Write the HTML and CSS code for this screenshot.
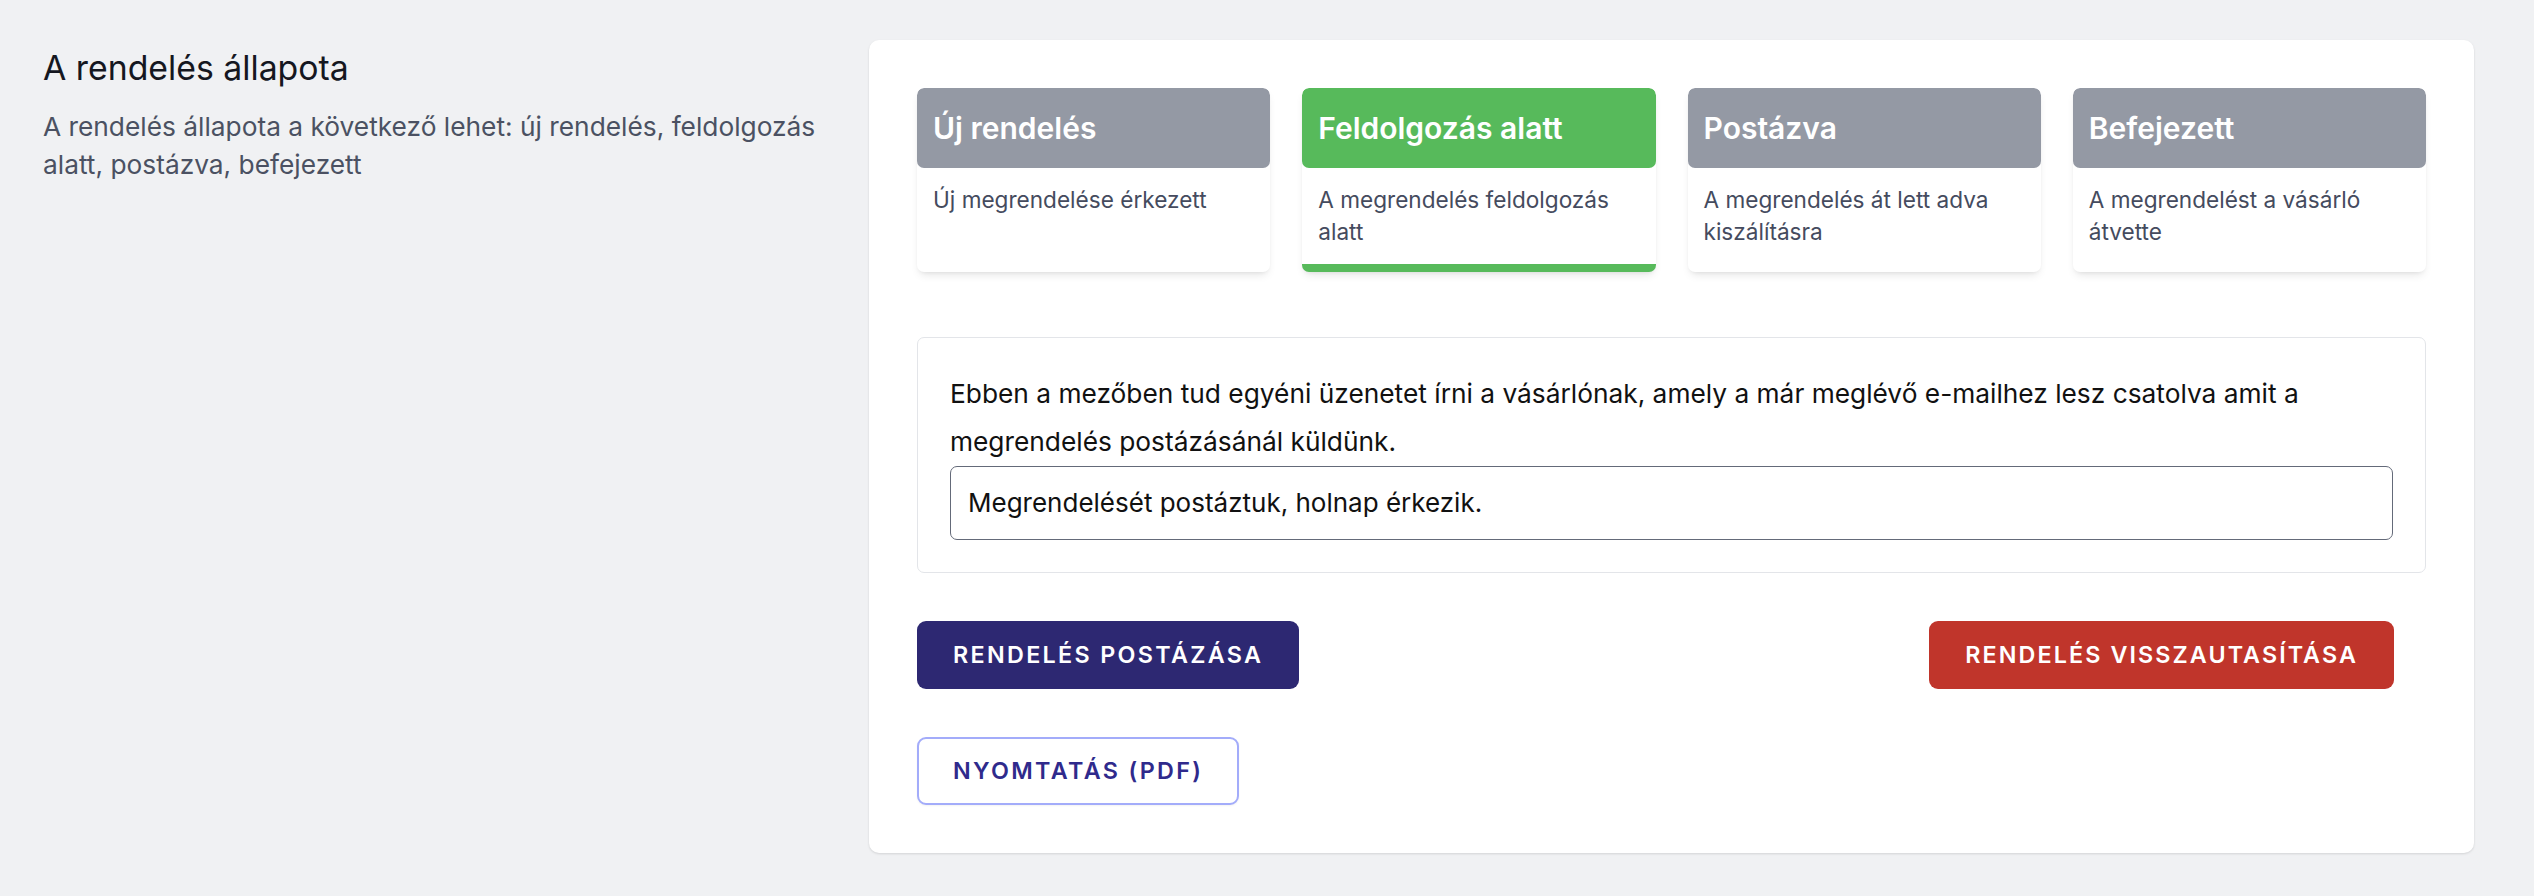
FILE: index.html
```html
<!DOCTYPE html>
<html lang="hu">
<head>
<meta charset="utf-8">
<title>A rendelés állapota</title>
<link rel="stylesheet" href="styles.css">
</head>
<body>
<div class="layout">
  <section class="intro">
    <h2 class="intro-title">A rendelés állapota</h2>
    <p class="intro-text">A rendelés állapota a következő lehet: új rendelés, feldolgozás alatt, postázva, befejezett</p>
  </section>

  <section class="panel">
    <div class="statuses">
      <div class="status">
        <div class="status-head">Új rendelés</div>
        <div class="status-body">Új megrendelése érkezett</div>
      </div>
      <div class="status status-active">
        <div class="status-head">Feldolgozás alatt</div>
        <div class="status-body">A megrendelés feldolgozás alatt</div>
      </div>
      <div class="status">
        <div class="status-head">Postázva</div>
        <div class="status-body">A megrendelés át lett adva kiszálításra</div>
      </div>
      <div class="status">
        <div class="status-head">Befejezett</div>
        <div class="status-body">A megrendelést a vásárló átvette</div>
      </div>
    </div>

    <div class="message-box">
      <label class="message-label" for="msg">Ebben a mezőben tud egyéni üzenetet írni a vásárlónak, amely a már meglévő e-mailhez lesz csatolva amit a megrendelés postázásánál küldünk.</label>
      <input id="msg" class="message-input" type="text" value="Megrendelését postáztuk, holnap érkezik.">
    </div>

    <div class="actions">
      <button class="btn btn-primary" type="button">Rendelés postázása</button>
      <button class="btn btn-danger" type="button">Rendelés visszautasítása</button>
    </div>
    <div class="actions-secondary">
      <button class="btn btn-outline" type="button">Nyomtatás (PDF)</button>
    </div>
  </section>
</div>
</body>
</html>
```

FILE: styles.css
```css
* { box-sizing: border-box; }

html, body {
  margin: 0;
  padding: 0;
}

body {
  background: #f0f1f3;
  font-family: Inter, "Noto Sans", "Liberation Sans", sans-serif;
  color: #111827;
}

.layout {
  display: grid;
  grid-template-columns: 790px 1fr;
  column-gap: 36px;
  padding: 40px 60px 40px 43px;
  align-items: start;
}

.intro-title {
  margin: 8px 0 0;
  font-size: 33.8px;
  line-height: 40px;
  font-weight: 400;
  color: #15171f;
}

.intro-text {
  margin: 20px 0 0;
  font-size: 26.3px;
  line-height: 38px;
  color: #4b5162;
}

.panel {
  background: #ffffff;
  border-radius: 10px;
  box-shadow: 0 1px 3px rgba(0, 0, 0, 0.08), 0 1px 2px rgba(0, 0, 0, 0.05);
  padding: 48px;
}

.statuses {
  display: grid;
  grid-template-columns: repeat(4, 1fr);
  column-gap: 32px;
  align-items: stretch;
}

.status {
  background: #ffffff;
  border-radius: 7px;
  box-shadow: 0 5px 10px -3px rgba(0, 0, 0, 0.12), 0 2px 4px -2px rgba(0, 0, 0, 0.07);
  overflow: hidden;
}

.status-active {
  border-bottom: 8px solid #57ba5b;
}

.status-head {
  height: 80px;
  display: flex;
  align-items: center;
  padding: 0 16px;
  background: #9499a4;
  color: #ffffff;
  font-size: 30px;
  font-weight: 600;
  border-radius: 7px;
}

.status-active .status-head {
  background: #57ba5b;
}

.status-body {
  padding: 16px;
  font-size: 22.6px;
  line-height: 32px;
  color: #454b5e;
}

.message-box {
  margin-top: 65px;
  border: 1px solid #e3e5e9;
  border-radius: 7px;
  padding: 32px;
}

.message-label {
  display: block;
  font-size: 26.3px;
  line-height: 48px;
  color: #111111;
}

.message-input {
  display: block;
  width: 100%;
  margin: 0;
  padding: 18px 17px;
  font-family: inherit;
  font-size: 26px;
  line-height: 36px;
  color: #111111;
  border: 1.5px solid #646a79;
  border-radius: 7px;
  background: #ffffff;
  outline: none;
}

.actions {
  margin-top: 48px;
  display: flex;
  justify-content: space-between;
  padding-right: 32px;
}

.actions-secondary {
  margin-top: 48px;
  display: flex;
}

.btn {
  font-family: inherit;
  font-size: 23.3px;
  line-height: 30px;
  font-weight: 600;
  letter-spacing: 0.1em;
  text-transform: uppercase;
  border-radius: 9px;
  padding: 19px 36px;
  border: none;
  cursor: pointer;
}

.btn-primary {
  background: #2d2872;
  color: #ffffff;
}

.btn-danger {
  background: #c0352b;
  color: #ffffff;
  letter-spacing: 0.09em;
}

.btn-outline {
  background: #ffffff;
  color: #2f2a8c;
  border: 2px solid #a3acfa;
  padding: 17px 34px;
  box-shadow: 0 1px 2px rgba(0, 0, 0, 0.05);
}
```
